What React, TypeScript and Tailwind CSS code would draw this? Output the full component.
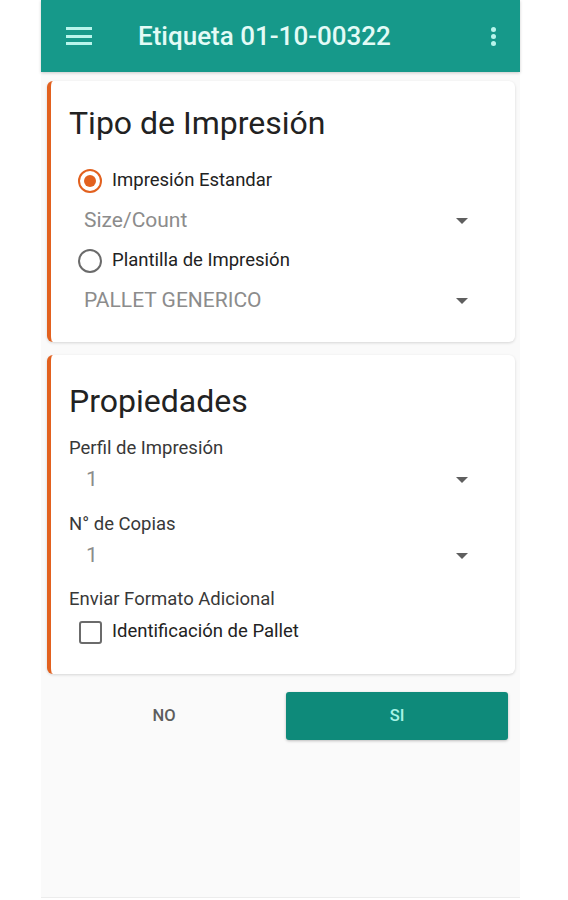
import { useState } from 'react';

function Caret() {
  return (
    <svg width="12" height="6" viewBox="0 0 12 6" className="shrink-0">
      <path d="M0 0h12L6 6z" fill="#5f5f5f" />
    </svg>
  );
}

function Radio({ checked }: { checked: boolean }) {
  return (
    <span
      className={
        'flex h-[24px] w-[24px] items-center justify-center rounded-full border-[2.5px] ' +
        (checked ? 'border-[#e2611f]' : 'border-[#6b6b6b]')
      }
    >
      {checked && <span className="h-[12px] w-[12px] rounded-full bg-[#e2611f]" />}
    </span>
  );
}

function SelectRow({ value, indent }: { value: string; indent: string }) {
  return (
    <div className={'flex items-center pr-[47px] ' + indent}>
      <span className="flex-1 text-[21px] text-[#8c8c8c]">{value}</span>
      <Caret />
    </div>
  );
}

export default function App() {
  const [mode, setMode] = useState<'std' | 'tpl'>('std');
  const [pallet, setPallet] = useState(false);

  return (
    <div className="min-h-screen bg-white pl-[41px]" style={{ fontFamily: 'Roboto, "Noto Sans", sans-serif' }}>
      <div className="flex h-[898px] w-[479px] flex-col border-b border-[#ececec] bg-[#fafafa]">
        <header className="flex h-[72px] items-center bg-[#16998a] pl-[25px] pr-[24px] shadow-[0_1px_3px_rgba(0,0,0,0.2)]">
          <div className="flex w-[26px] flex-col gap-[4.5px]">
            <span className="h-[3px] bg-[#b8f5ec]" />
            <span className="h-[3px] bg-[#b8f5ec]" />
            <span className="h-[3px] bg-[#b8f5ec]" />
          </div>
          <h1 className="ml-[46px] flex-1 text-[26px] font-medium text-[#e3fbf6]">Etiqueta 01-10-00322</h1>
          <div className="flex flex-col items-center gap-[2px]">
            <span className="h-[5px] w-[5px] rounded-full bg-[#b8f5ec]" />
            <span className="h-[5px] w-[5px] rounded-full bg-[#b8f5ec]" />
            <span className="h-[5px] w-[5px] rounded-full bg-[#b8f5ec]" />
          </div>
        </header>

        <div className="ml-[6px] mr-[5px] mt-[9px] flex flex-col gap-[13px]">
          <section className="rounded-[6px] border-l-[4px] border-[#e2611f] bg-white pb-[21px] pl-[18px] pt-[25px] shadow-[0_1px_3px_rgba(0,0,0,0.15)]">
            <h2 className="h-[34px] text-[32px] leading-[34px] text-[#222]">Tipo de Impresión</h2>
            <div className="mt-[21px] flex flex-col">
              <button onClick={() => setMode('std')} className="flex h-[40px] items-center gap-[10px] pl-[9px] text-left">
                <Radio checked={mode === 'std'} />
                <span className="text-[18.5px] text-[#222]">Impresión Estandar</span>
              </button>
              <div className="h-[40px]">
                <SelectRow value="Size/Count" indent="pl-[15px] h-full" />
              </div>
              <button onClick={() => setMode('tpl')} className="flex h-[40px] items-center gap-[10px] pl-[9px] text-left">
                <Radio checked={mode === 'tpl'} />
                <span className="text-[18.5px] text-[#222]">Plantilla de Impresión</span>
              </button>
              <div className="h-[40px]">
                <SelectRow value="PALLET GENERICO" indent="pl-[15px] h-full" />
              </div>
            </div>
          </section>

          <section className="rounded-[6px] border-l-[4px] border-[#e2611f] bg-white pb-[24px] pl-[18px] pt-[29px] shadow-[0_1px_3px_rgba(0,0,0,0.15)]">
            <h2 className="h-[34px] text-[32px] leading-[34px] text-[#222]">Propiedades</h2>
            <div className="mt-[19px] flex h-[24px] items-center text-[18.5px] text-[#383838]">Perfil de Impresión</div>
            <div className="h-[38px]">
              <SelectRow value="1" indent="pl-[17px] h-full" />
            </div>
            <div className="mt-[14px] flex h-[24px] items-center text-[18.5px] text-[#383838]">N° de Copias</div>
            <div className="h-[38px]">
              <SelectRow value="1" indent="pl-[17px] h-full" />
            </div>
            <div className="mt-[13px] flex h-[24px] items-center text-[18.5px] text-[#383838]">Enviar Formato Adicional</div>
            <button onClick={() => setPallet(!pallet)} className="mt-[2px] flex h-[36px] items-center gap-[10px] pl-[10px] text-left">
              <span className="flex h-[23px] w-[23px] items-center justify-center rounded-[3px] border-[2.5px] border-[#6b6b6b]">
                {pallet && <span className="h-[11px] w-[11px] bg-[#e2611f]" />}
              </span>
              <span className="text-[18.5px] text-[#222]">Identificación de Pallet</span>
            </button>
          </section>
        </div>

        <div className="mt-[18px] flex gap-[11px] px-[12px]">
          <button className="h-[48px] flex-1 text-[16.5px] font-medium text-[#5e5e5e]">NO</button>
          <button className="h-[48px] flex-1 rounded-[3px] bg-[#0e8a7a] text-[16.5px] font-medium text-[#a6f3e6] shadow-[0_1px_3px_rgba(0,0,0,0.25)]">
            SI
          </button>
        </div>
      </div>
    </div>
  );
}
